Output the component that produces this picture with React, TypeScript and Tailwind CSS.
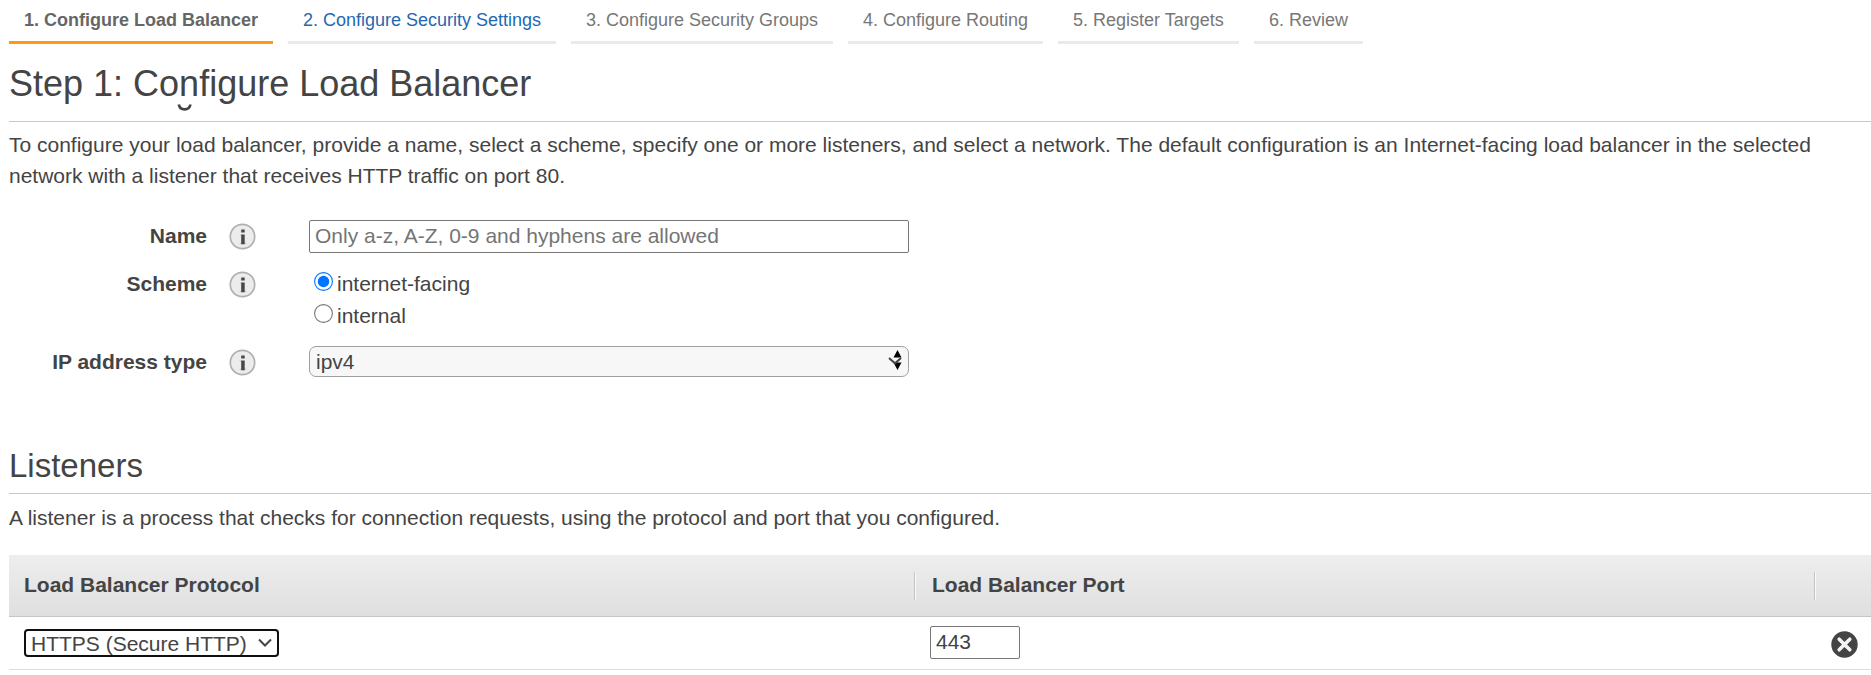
import React from "react";

const steps = [
  { label: "1. Configure Load Balancer", cls: "w-[264px] border-[#ff9914] font-bold text-[#666]" },
  { label: "2. Configure Security Settings", cls: "w-[268px] border-[#eaeaea] text-[#1f69b3]" },
  { label: "3. Configure Security Groups", cls: "w-[262px] border-[#eaeaea] text-[#777]" },
  { label: "4. Configure Routing", cls: "w-[195px] border-[#eaeaea] text-[#777]" },
  { label: "5. Register Targets", cls: "w-[181px] border-[#eaeaea] text-[#777]" },
  { label: "6. Review", cls: "w-[109px] border-[#eaeaea] text-[#777]" },
];

function InfoIcon() {
  return (
    <svg viewBox="0 0 27 27" className="size-[27px] shrink-0">
      <circle cx="13.5" cy="13.5" r="12.2" fill="#ececec" stroke="#b0b0b0" strokeWidth="1.7" />
      <path d="M10.8 11.4h2v1.6h-2zM10.8 19.6h6.4v1.6h-6.4z" fill="#cfcfcf" />
      <path d="M12.2 6.6h3.5v3h-3.5zM12.2 11.4h3.5v9.8h-3.5z" fill="#484848" />
    </svg>
  );
}

function Label({ children }: { children: string }) {
  return (
    <div className="flex shrink-0">
      <div className="w-[198px] text-right font-bold">{children}</div>
      <div className="ml-[22px] w-[80px] pt-[3px]">
        <InfoIcon />
      </div>
    </div>
  );
}

function Radio({ checked }: { checked?: boolean }) {
  return (
    <svg viewBox="0 0 19 19" className="mt-1 size-[19px] shrink-0">
      <circle cx="9.5" cy="9.5" r="8.9" fill="#fff" stroke={checked ? "#0075ff" : "#767676"} strokeWidth="1.1" />
      {checked && <circle cx="9.5" cy="9.5" r="5.7" fill="#0075ff" />}
    </svg>
  );
}

function Divider() {
  return <div className="h-7 w-[2px] shrink-0 border-r border-l border-r-[#fafafa] border-l-[#c3c3c3]" />;
}

export default function App() {
  return (
    <div className="h-[675px] w-[1871px] overflow-hidden bg-white pl-[9px] font-['Liberation_Sans',Arial,sans-serif] text-[21px] leading-[31px] text-[#444]">
      <nav className="flex h-11 gap-[15px] text-[18px] leading-5">
        {steps.map((s) => (
          <div key={s.label} className={`shrink-0 border-b-[3px] pt-[10px] pl-[15px] whitespace-nowrap ${s.cls}`}>
            {s.label}
          </div>
        ))}
      </nav>

      <header className="relative h-[78px] border-b border-[#c8c8c8] pt-5">
        <h1 className="text-[36px] leading-10 whitespace-nowrap">Step 1: Configure Load Balancer</h1>
        <svg viewBox="0 0 15 8" className="absolute top-[60px] left-[168px] h-2 w-[15px]">
          <path d="M1.8 0.5C2.4 4 4.2 5.3 7.5 5.3S13 3.8 13.3 0.5" fill="none" stroke="#444" strokeWidth="2.7" />
        </svg>
      </header>

      <p className="pt-[7px] whitespace-nowrap">
        To configure your load balancer, provide a name, select a scheme, specify one or more listeners, and select a network. The default configuration is an Internet-facing load balancer in the selected
        <br />
        network with a listener that receives HTTP traffic on port 80.
      </p>

      <section className="pt-[29px]">
        <div className="flex h-12">
          <Label>Name</Label>
          <div className="h-[33px] w-[600px] rounded-[2px] border border-[#767676] pl-[5px] leading-[29px] text-[#757575]">
            Only a-z, A-Z, 0-9 and hyphens are allowed
          </div>
        </div>
        <div className="flex h-[78px]">
          <Label>Scheme</Label>
          <div className="pl-[5px]">
            <div className="flex h-8 gap-1">
              <Radio checked />
              <span>internet-facing</span>
            </div>
            <div className="flex h-8 gap-1">
              <Radio />
              <span>internal</span>
            </div>
          </div>
        </div>
        <div className="flex h-12">
          <Label>IP address type</Label>
          <div className="flex h-[31px] w-[600px] justify-between rounded-[7px] border border-[#a0a0a0] bg-[#f7f7f7] pl-[6px] leading-[29px]">
            <span>ipv4</span>
            <svg viewBox="0 0 14 21" className="mt-[3px] mr-[6px] h-[21px] w-[14px]">
              <path d="M9.5 0l4 7.5h-8zM5.5 12.5h8l-4 7.5z" fill="#000" />
              <path d="M1 8l6 5.3L13 8" fill="none" stroke="#444" strokeWidth="2" />
            </svg>
          </div>
        </div>
      </section>

      <h2 className="h-[100px] border-b border-[#c8c8c8] pt-[54px] text-[33px] leading-9">Listeners</h2>
      <p className="h-[61px] pt-2">A listener is a process that checks for connection requests, using the protocol and port that you configured.</p>

      <div className="flex h-[62px] items-center border-b border-[#c5c5c5] bg-linear-to-b from-[#eee] to-[#dfdfdf] font-bold">
        <div className="w-[905px] pb-[2px] pl-[15px]">Load Balancer Protocol</div>
        <Divider />
        <div className="w-[898px] pb-[2px] pl-4">Load Balancer Port</div>
        <Divider />
      </div>
      <div className="flex h-[53px] border-b border-[#ddd]">
        <div className="w-[921px] pt-3 pl-[15px]">
          <div className="flex h-7 w-[255px] items-center justify-between rounded-[4px] border-2 border-[#101010] pr-[5px] pl-[5px] whitespace-nowrap">
            <span>HTTPS (Secure HTTP)</span>
            <svg viewBox="0 0 14 10" className="h-[10px] w-[14px] shrink-0">
              <path d="M1 1.5l6 6 6-6" fill="none" stroke="#444" strokeWidth="2" />
            </svg>
          </div>
        </div>
        <div className="w-[900px] pt-[9px]">
          <div className="h-[33px] w-[90px] rounded-[2px] border border-[#767676] pl-[5px] leading-[29px]">443</div>
        </div>
        <svg viewBox="0 0 27 27" className="mt-[14px] ml-[1px] size-[27px] shrink-0">
          <circle cx="13.5" cy="13.5" r="13.2" fill="#444" />
          <path d="M8.2 8.2l10.6 10.6M18.8 8.2L8.2 18.8" stroke="#f4f4f4" strokeWidth="3.6" strokeLinecap="round" />
        </svg>
      </div>
    </div>
  );
}
